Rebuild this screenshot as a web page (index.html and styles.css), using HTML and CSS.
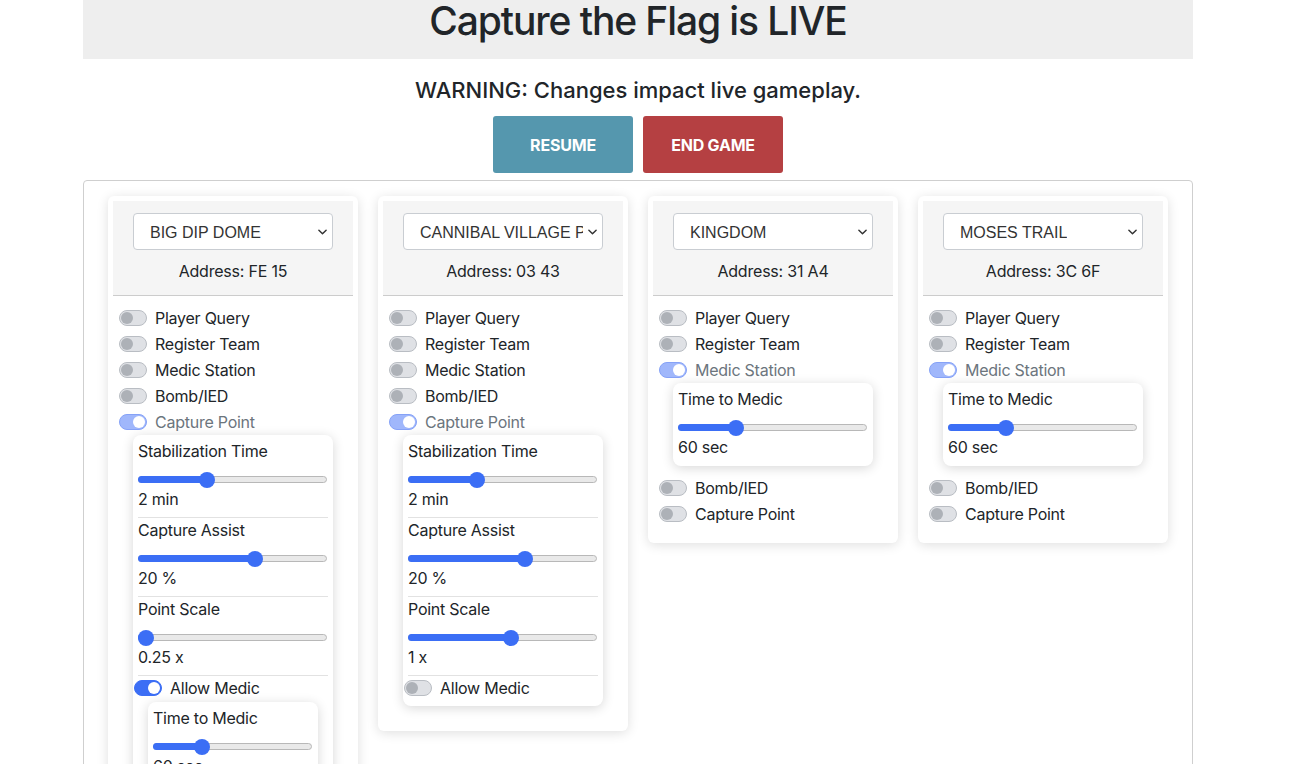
FILE: index.html
```html
<!DOCTYPE html>
<html lang="en">
<head>
<meta charset="utf-8">
<title>Capture the Flag is LIVE</title>
<link rel="stylesheet" href="styles.css">
</head>
<body>
<div class="page">
  <header class="banner"><h1>Capture the Flag is LIVE</h1></header>
  <h4 class="warning">WARNING: Changes impact live gameplay.</h4>
  <div class="actions">
    <button class="btn btn-resume">RESUME</button>
    <button class="btn btn-end">END GAME</button>
  </div>
  <section class="board">
    <!-- Card 1 -->
    <div class="card">
      <div class="card-head">
        <div class="select"><span class="select-text">BIG DIP DOME</span><svg class="chev" viewBox="0 0 10 6" width="9" height="6"><path d="M1 1l4 4 4-4" fill="none" stroke="#333" stroke-width="1.6" stroke-linecap="round" stroke-linejoin="round"/></svg></div>
        <div class="address">Address: FE 15</div>
      </div>
      <div class="toggles">
        <div class="row"><span class="sw"></span><span class="lbl">Player Query</span></div>
        <div class="row"><span class="sw"></span><span class="lbl">Register Team</span></div>
        <div class="row"><span class="sw"></span><span class="lbl">Medic Station</span></div>
        <div class="row"><span class="sw"></span><span class="lbl">Bomb/IED</span></div>
        <div class="row"><span class="sw sw-soft"></span><span class="lbl lbl-muted">Capture Point</span></div>
        <div class="panel">
          <div class="field">
            <div class="f-label">Stabilization Time</div>
            <div class="slider"><div class="track" style="--v:0.35"><div class="fill"></div><div class="thumb"></div></div></div>
            <div class="f-value">2 min</div>
          </div>
          <div class="field">
            <div class="f-label">Capture Assist</div>
            <div class="slider"><div class="track" style="--v:0.63"><div class="fill"></div><div class="thumb"></div></div></div>
            <div class="f-value">20 %</div>
          </div>
          <div class="field">
            <div class="f-label">Point Scale</div>
            <div class="slider"><div class="track" style="--v:0"><div class="fill"></div><div class="thumb"></div></div></div>
            <div class="f-value">0.25 x</div>
          </div>
          <div class="row row-in"><span class="sw sw-on"></span><span class="lbl">Allow Medic</span></div>
          <div class="panel panel-nested">
            <div class="field field-last">
              <div class="f-label">Time to Medic</div>
              <div class="slider"><div class="track" style="--v:0.29"><div class="fill"></div><div class="thumb"></div></div></div>
              <div class="f-value">60 sec</div>
            </div>
          </div>
        </div>
      </div>
    </div>
    <!-- Card 2 -->
    <div class="card">
      <div class="card-head">
        <div class="select"><span class="select-text">CANNIBAL VILLAGE PLAZA</span><svg class="chev" viewBox="0 0 10 6" width="9" height="6"><path d="M1 1l4 4 4-4" fill="none" stroke="#333" stroke-width="1.6" stroke-linecap="round" stroke-linejoin="round"/></svg></div>
        <div class="address">Address: 03 43</div>
      </div>
      <div class="toggles">
        <div class="row"><span class="sw"></span><span class="lbl">Player Query</span></div>
        <div class="row"><span class="sw"></span><span class="lbl">Register Team</span></div>
        <div class="row"><span class="sw"></span><span class="lbl">Medic Station</span></div>
        <div class="row"><span class="sw"></span><span class="lbl">Bomb/IED</span></div>
        <div class="row"><span class="sw sw-soft"></span><span class="lbl lbl-muted">Capture Point</span></div>
        <div class="panel">
          <div class="field">
            <div class="f-label">Stabilization Time</div>
            <div class="slider"><div class="track" style="--v:0.35"><div class="fill"></div><div class="thumb"></div></div></div>
            <div class="f-value">2 min</div>
          </div>
          <div class="field">
            <div class="f-label">Capture Assist</div>
            <div class="slider"><div class="track" style="--v:0.63"><div class="fill"></div><div class="thumb"></div></div></div>
            <div class="f-value">20 %</div>
          </div>
          <div class="field">
            <div class="f-label">Point Scale</div>
            <div class="slider"><div class="track" style="--v:0.55"><div class="fill"></div><div class="thumb"></div></div></div>
            <div class="f-value">1 x</div>
          </div>
          <div class="row row-in"><span class="sw"></span><span class="lbl">Allow Medic</span></div>
        </div>
      </div>
    </div>
    <!-- Card 3 -->
    <div class="card">
      <div class="card-head">
        <div class="select"><span class="select-text">KINGDOM</span><svg class="chev" viewBox="0 0 10 6" width="9" height="6"><path d="M1 1l4 4 4-4" fill="none" stroke="#333" stroke-width="1.6" stroke-linecap="round" stroke-linejoin="round"/></svg></div>
        <div class="address">Address: 31 A4</div>
      </div>
      <div class="toggles">
        <div class="row"><span class="sw"></span><span class="lbl">Player Query</span></div>
        <div class="row"><span class="sw"></span><span class="lbl">Register Team</span></div>
        <div class="row"><span class="sw sw-soft"></span><span class="lbl lbl-muted">Medic Station</span></div>
        <div class="panel">
          <div class="field field-last">
            <div class="f-label">Time to Medic</div>
            <div class="slider"><div class="track" style="--v:0.29"><div class="fill"></div><div class="thumb"></div></div></div>
            <div class="f-value">60 sec</div>
          </div>
        </div>
        <div class="row"><span class="sw"></span><span class="lbl">Bomb/IED</span></div>
        <div class="row"><span class="sw"></span><span class="lbl">Capture Point</span></div>
      </div>
    </div>
    <!-- Card 4 -->
    <div class="card">
      <div class="card-head">
        <div class="select"><span class="select-text">MOSES TRAIL</span><svg class="chev" viewBox="0 0 10 6" width="9" height="6"><path d="M1 1l4 4 4-4" fill="none" stroke="#333" stroke-width="1.6" stroke-linecap="round" stroke-linejoin="round"/></svg></div>
        <div class="address">Address: 3C 6F</div>
      </div>
      <div class="toggles">
        <div class="row"><span class="sw"></span><span class="lbl">Player Query</span></div>
        <div class="row"><span class="sw"></span><span class="lbl">Register Team</span></div>
        <div class="row"><span class="sw sw-soft"></span><span class="lbl lbl-muted">Medic Station</span></div>
        <div class="panel">
          <div class="field field-last">
            <div class="f-label">Time to Medic</div>
            <div class="slider"><div class="track" style="--v:0.29"><div class="fill"></div><div class="thumb"></div></div></div>
            <div class="f-value">60 sec</div>
          </div>
        </div>
        <div class="row"><span class="sw"></span><span class="lbl">Bomb/IED</span></div>
        <div class="row"><span class="sw"></span><span class="lbl">Capture Point</span></div>
      </div>
    </div>
  </section>
</div>
</body>
</html>
```

FILE: styles.css
```css
* { box-sizing: border-box; }
html, body { margin: 0; padding: 0; background: #fff; }
body {
  font-family: "Inter", "Liberation Sans", Arial, sans-serif;
  color: #212529;
  font-size: 16px;
  overflow: hidden;
  height: 764px;
}
.page {
  width: 1110px;
  margin-left: 83px;
}
.banner {
  height: 59px;
  background: #eeeeee;
}
.banner h1 {
  margin: 0;
  font-size: 39px;
  line-height: 41px;
  font-weight: 500;
  text-align: center;
  letter-spacing: -1.1px;
}
.warning {
  margin: 17px 0 0;
  font-size: 22px;
  line-height: 28px;
  font-weight: 500;
  text-align: center;
}
.actions {
  display: flex;
  justify-content: center;
  gap: 10px;
  margin-top: 12px;
}
.btn {
  width: 140px;
  height: 57px;
  border: 0;
  border-radius: 3px;
  color: #fff;
  font-family: "Inter", "Liberation Sans", Arial, sans-serif;
  font-weight: 700;
  font-size: 16px;
  letter-spacing: -0.2px;
  padding: 0;
}
.btn-resume { background: #5597ae; }
.btn-end { background: #b54042; }
.board {
  margin-top: 7px;
  border: 1px solid #cfcfcf;
  border-radius: 4px;
  padding: 15px 24px;
  display: flex;
  gap: 20px;
  align-items: flex-start;
  min-height: 600px;
}
.card {
  width: 250px;
  padding: 5px;
  background: #fff;
  border-radius: 6px;
  box-shadow: 0 2px 12px rgba(0, 0, 0, 0.13);
}
.card-head {
  background: #f5f5f5;
  border-bottom: 1px solid #cccccc;
  padding: 12px 20px 12px;
}
.select {
  position: relative;
  height: 37px;
  background: #fff;
  border: 1px solid #c9cdd2;
  border-radius: 4px;
  padding: 2px 19px 0 16px;
  display: flex;
  align-items: center;
  overflow: hidden;
}
.select-text {
  white-space: nowrap;
  overflow: hidden;
  font-size: 16px;
  color: #333;
  font-family: "Liberation Sans", Arial, sans-serif;
}
.chev {
  position: absolute;
  right: 5px;
  top: 15px;
}
.address {
  margin-top: 9px;
  text-align: center;
  line-height: 24px;
  letter-spacing: -0.2px;
}
.toggles {
  padding: 9px 0 11px 6px;
}
.row {
  display: flex;
  align-items: center;
  height: 26px;
  gap: 8px;
}
.lbl { line-height: 24px; letter-spacing: -0.25px; }
.lbl-muted { color: #6c757d; }
.sw {
  position: relative;
  width: 28px;
  height: 16px;
  flex: none;
  border-radius: 8px;
  background: #dfe1e5;
  border: 1px solid #b9bdc3;
}
.sw::after {
  content: "";
  position: absolute;
  top: 1px;
  left: 1px;
  width: 12px;
  height: 12px;
  border-radius: 50%;
  background: #adb1b7;
}
.sw-soft {
  background: #a0b7fb;
  border-color: #86a2f7;
}
.sw-soft::after { background: #fff; left: 13px; }
.sw-on {
  background: #3c6ef5;
  border-color: #3c6ef5;
}
.sw-on::after { background: #fff; left: 13px; }
.panel {
  width: 200px;
  margin: 0 0 9px 14px;
  padding: 4px 5px 4px;
  background: #fff;
  border-radius: 8px;
  box-shadow: 0 2px 12px rgba(0, 0, 0, 0.16);
}
.panel-nested {
  width: 170px;
  margin: 0 0 0 10px;
}
.field {
  border-bottom: 1px solid #e2e2e2;
  padding-bottom: 6px;
}
.field-last {
  border-bottom: 0;
  padding-bottom: 3px;
}
.f-label, .f-value { line-height: 24px; letter-spacing: -0.25px; }
.slider {
  height: 24px;
  padding-top: 13px;
}
.track {
  position: relative;
  height: 7px;
  border-radius: 4px;
  background: #e9e9e9;
  border: 1px solid #b8b8b8;
  margin-right: 1px;
}
.fill {
  position: absolute;
  left: -1px;
  top: -1px;
  bottom: -1px;
  width: calc(var(--v) * (100% - 14px) + 9px);
  background: #3b6ef5;
  border-radius: 4px 0 0 4px;
}
.thumb {
  position: absolute;
  top: 50%;
  left: calc(var(--v) * (100% - 14px) - 1px);
  width: 16px;
  height: 16px;
  margin-top: -8px;
  border-radius: 50%;
  background: #3b6ef5;
}
.row-in {
  margin-left: -4px;
  margin-top: -1px;
  margin-bottom: 1px;
}
```
